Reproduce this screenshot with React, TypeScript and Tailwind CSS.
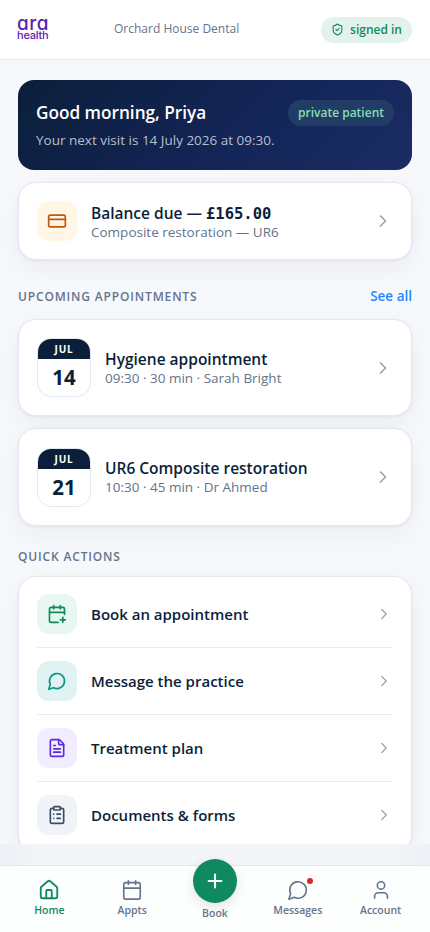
import type { ReactNode } from "react";
import {
  Calendar,
  CalendarPlus,
  ChevronRight,
  ClipboardList,
  CreditCard,
  FileText,
  House,
  Plus,
  ShieldCheck,
  User,
} from "lucide-react";

const APPOINTMENTS = [
  { month: "JUL", day: "14", title: "Hygiene appointment", meta: "09:30 · 30 min · Sarah Bright" },
  { month: "JUL", day: "21", title: "UR6 Composite restoration", meta: "10:30 · 45 min · Dr Ahmed" },
];

const ACTIONS = [
  {
    label: "Book an appointment",
    tile: "bg-[#e8f7ef] text-[#0f8a5f]",
    icon: <CalendarPlus size={20} strokeWidth={2} />,
  },
  {
    label: "Message the practice",
    tile: "bg-[#e0f2f1] text-[#0d9488]",
    icon: <Bubble size={20} strokeWidth={2} />,
  },
  {
    label: "Treatment plan",
    tile: "bg-[#f1edff] text-[#5b2be0]",
    icon: <FileText size={20} strokeWidth={2} />,
  },
  {
    label: "Documents & forms",
    tile: "bg-[#f0f4f9] text-[#3d4d63]",
    icon: <ClipboardList size={20} strokeWidth={2} />,
  },
];

const CARD =
  "rounded-[18px] border border-[#e2e8f1] bg-white shadow-[0_1px_3px_rgba(11,31,58,0.06),0_8px_24px_rgba(11,31,58,0.05)]";

function Bubble({ size, strokeWidth }: { size: number; strokeWidth: number }) {
  return (
    <svg
      width={size}
      height={size}
      viewBox="0 0 24 24"
      fill="none"
      stroke="currentColor"
      strokeWidth={strokeWidth}
      strokeLinecap="round"
      strokeLinejoin="round"
    >
      <path d="M7.9 20A9 9 0 1 0 4 16.1L2 22Z" />
    </svg>
  );
}

function NavItem({ label, active, children }: { label: string; active?: boolean; children: ReactNode }) {
  return (
    <a
      href="#"
      className={`flex flex-1 flex-col items-center gap-px pt-[13px] ${
        active ? "text-[#0f8a5f]" : "text-[#64748b]"
      }`}
    >
      <span className="relative h-[22px]">{children}</span>
      <span className="text-[10.5px] leading-4 font-semibold">{label}</span>
    </a>
  );
}

export default function App() {
  return (
    <div className="flex h-[932px] w-[430px] flex-col overflow-hidden bg-[#f7f8fc] font-['Open_Sans','Noto_Sans',sans-serif] text-[#0b1f3a]">
      <header className="flex h-[60px] shrink-0 items-center border-b border-[#e2e8f0] bg-white px-[18px]">
        <div className="mt-4 flex w-8 flex-col self-start font-['Inter',sans-serif] text-[#5b21b6]">
          <span className="-ml-px text-[19px] leading-4 font-medium tracking-[0.5px] [font-feature-settings:'cv11']">
            ara
          </span>
          <span className="-mt-px -ml-px text-[11px] leading-[9px] font-medium tracking-[-0.2px]">health</span>
        </div>
        <p className="mb-px ml-16 flex-1 text-xs text-[#64748b]">Orchard House Dental</p>
        <span className="flex h-[26px] items-center gap-1.5 rounded-full bg-[#e3f2ec] px-2.5 text-xs font-semibold text-[#0f8a5f]">
          <ShieldCheck size={13} strokeWidth={2} />
          signed in
        </span>
      </header>

      <main className="flex min-h-0 flex-1 flex-col overflow-hidden px-[18px] pt-5">
        <section className="h-[90px] shrink-0 rounded-2xl bg-[linear-gradient(135deg,#0b1f3a_0%,#142559_60%,#1b2c63_100%)] px-[18px] pt-5">
          <div className="flex h-[26px] items-center justify-between">
            <h1 className="text-[17.2px] font-semibold text-white">Good morning, Priya</h1>
            <span className="flex h-[26px] items-center rounded-full bg-[#223d65] px-2.5 text-xs font-semibold text-[#86dfb3]">
              private patient
            </span>
          </div>
          <p className="mt-1 text-[13.5px] leading-5 text-[#b8bfcd]">Your next visit is 14 July 2026 at 09:30.</p>
        </section>

        <section className={`${CARD} mt-3 flex h-[78px] shrink-0 items-center px-[18px]`}>
          <span className="flex size-10 items-center justify-center rounded-xl bg-[#fff6e5] text-[#c2570c]">
            <CreditCard size={20} strokeWidth={2} />
          </span>
          <div className="ml-3.5 flex-1 pt-[3px]">
            <p className="h-[19px] text-[15.5px] leading-[19px] font-semibold">
              Balance due —{" "}
              <span className="font-['DejaVu_Sans_Mono',monospace] leading-none font-bold">£165.00</span>
            </p>
            <p className="text-[13.5px] leading-[18px] text-[#64748b]">Composite restoration — UR6</p>
          </div>
          <ChevronRight size={20} strokeWidth={2} className="text-[#94a3b8]" />
        </section>

        <div className="mt-[27px] flex h-5 shrink-0 items-center justify-between">
          <h2 className="text-xs font-semibold tracking-[0.84px] text-[#64748b]">UPCOMING APPOINTMENTS</h2>
          <a href="#" className="mb-0.5 text-[13.5px] font-semibold text-[#1e88ff]">
            See all
          </a>
        </div>

        <div className="mt-3 flex shrink-0 flex-col gap-3">
          {APPOINTMENTS.map((a) => (
            <article key={a.day} className={`${CARD} flex h-[97.4px] items-center px-[18px]`}>
              <div className="flex h-[59px] w-[54px] flex-col overflow-hidden rounded-[14px] border border-[#e2e8f1] text-center">
                <span className="h-5 bg-[#0b1f3a] text-[10px] leading-5 font-bold tracking-[0.8px] text-white">
                  {a.month}
                </span>
                <span className="text-[20.5px] leading-9 font-bold">{a.day}</span>
              </div>
              <div className="ml-3.5 flex-1">
                <h3 className="text-[15.5px] leading-[20px] font-semibold">{a.title}</h3>
                <p className="text-[13.5px] leading-[18px] text-[#64748b]">{a.meta}</p>
              </div>
              <ChevronRight size={20} strokeWidth={2} className="text-[#94a3b8]" />
            </article>
          ))}
        </div>

        <h2 className="mt-[21.2px] h-5 shrink-0 text-xs leading-5 font-semibold tracking-[0.84px] text-[#64748b]">
          QUICK ACTIONS
        </h2>

        <section className={`${CARD} mt-[9px] shrink-0 px-[18px] py-1`}>
          {ACTIONS.map((a) => (
            <div
              key={a.label}
              className="flex items-center gap-3.5 border-b border-[#e9edf3] py-[13px] last:border-b-0"
            >
              <span className={`flex size-10 items-center justify-center rounded-xl ${a.tile}`}>{a.icon}</span>
              <span className="flex-1 text-[15px] font-semibold">{a.label}</span>
              <ChevronRight size={18} strokeWidth={1.75} className="text-[#94a3b8]" />
            </div>
          ))}
        </section>
      </main>

      <footer className="flex h-[88px] shrink-0 flex-col bg-[linear-gradient(90deg,#eef0f6_0%,#f4f5f9_10%,#f4f5f9_90%,#eef0f6_100%)]">
        <nav className="mt-[21px] flex flex-1 border-t border-[#e2e8f1] bg-[#fdfefe] px-2">
          <NavItem label="Home" active>
            <House size={22} strokeWidth={2} />
          </NavItem>
          <NavItem label="Appts">
            <Calendar size={22} strokeWidth={1.75} />
          </NavItem>
          <a href="#" className="-mt-[7px] flex flex-1 flex-col items-center gap-[2px] text-[#64748b]">
            <span className="flex size-11 items-center justify-center rounded-full bg-[#0f8a5f] text-white shadow-[0_4px_12px_rgba(11,31,58,0.12)]">
              <Plus size={22} strokeWidth={2.25} />
            </span>
            <span className="text-[10.5px] leading-4 font-semibold">Book</span>
          </a>
          <NavItem label="Messages">
            <Bubble size={22} strokeWidth={1.75} />
            <i className="absolute -top-px -right-1 size-1.5 rounded-full bg-[#dc2626]" />
          </NavItem>
          <NavItem label="Account">
            <User size={22} strokeWidth={1.75} />
          </NavItem>
        </nav>
      </footer>
    </div>
  );
}
